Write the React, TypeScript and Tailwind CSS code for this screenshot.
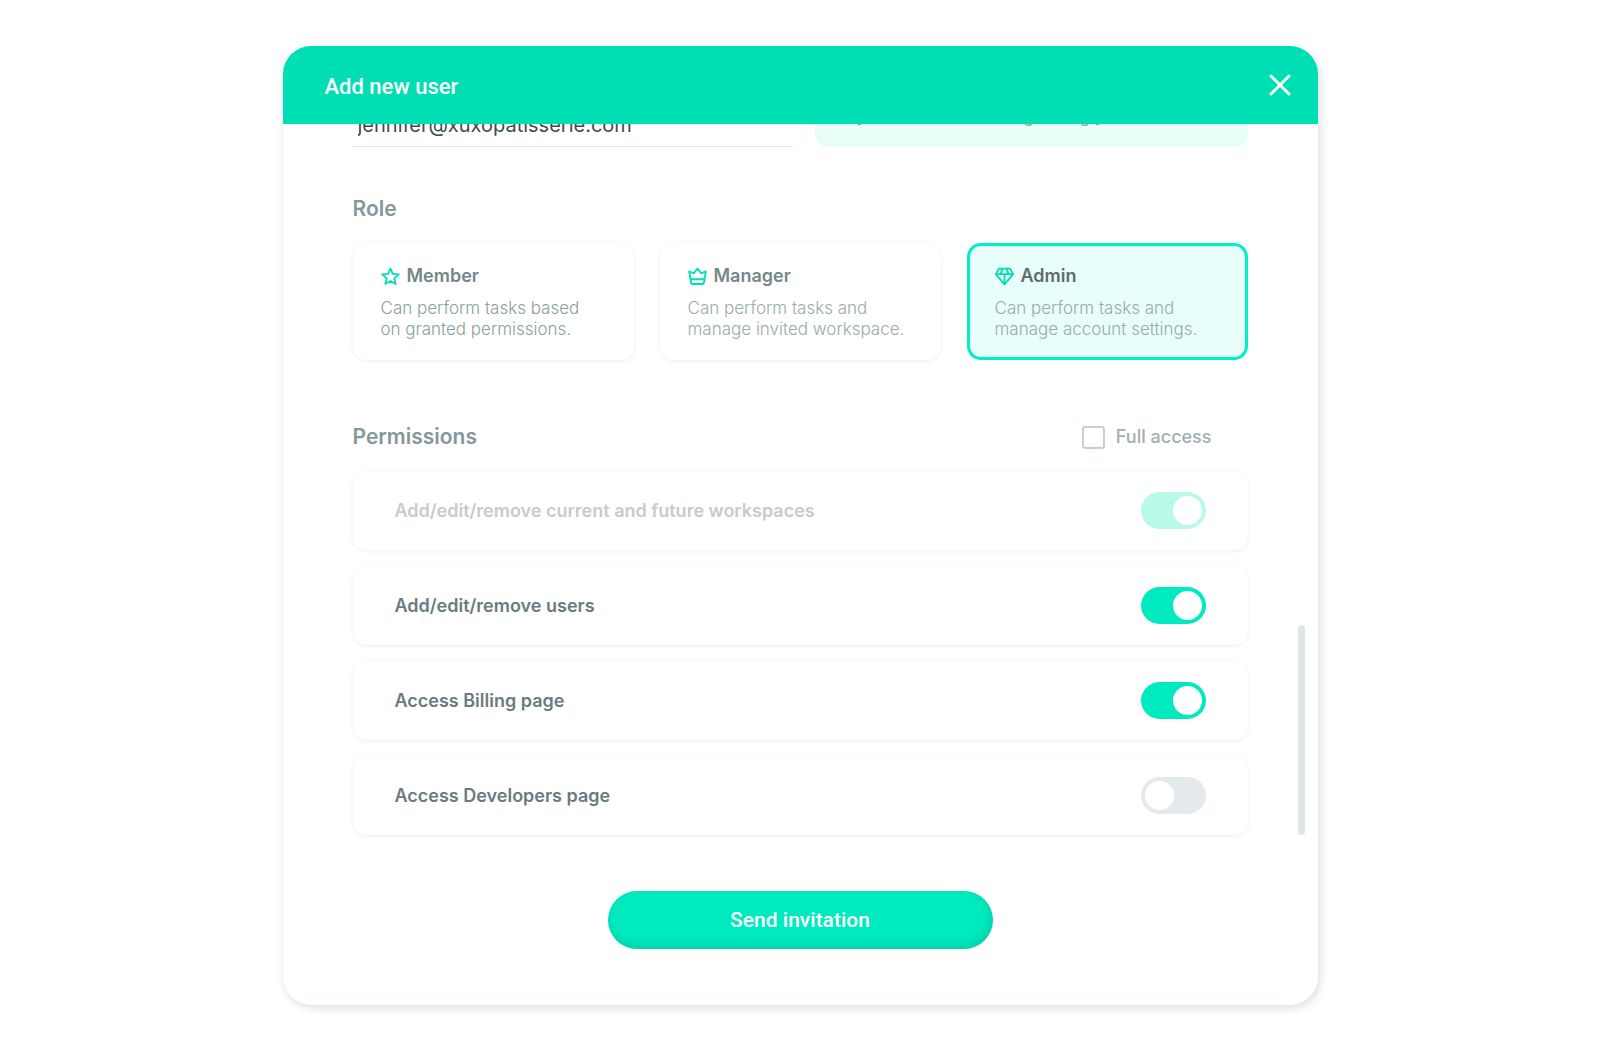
import { useState } from 'react'

const roles = [
  {
    id: 'member',
    name: 'Member',
    lines: ['Can perform tasks based', 'on granted permissions.'],
    icon: 'M12 2l2.900 6.700 7.600.6-5.700 5 1.700 7.200-6.500-3.800-6.500 3.800 1.700-7.200-5.700-5 7.600-.6z',
    text: 'text-[#8b9ea1]',
  },
  {
    id: 'manager',
    name: 'Manager',
    lines: ['Can perform tasks and', 'manage invited workspace.'],
    icon: 'M1.500 5.500l2.300 14.200q.3 1.800 2 1.800h12.400q1.700 0 2-1.800L22.500 5.500l-5.700 2.500L12 2 7.200 8zM3.200 15.500h17.600',
    text: 'text-[#9aabad]',
  },
  {
    id: 'admin',
    name: 'Admin',
    lines: ['Can perform tasks and', 'manage account settings.'],
    icon: 'M5 2h14l4 7L12 22 1 9zM1 9h22M12 22V9M7 9L9.500 2M17 9L14.500 2',
    text: 'text-[#97abab]',
  },
]

const initialPermissions = [
  { id: 'workspaces', label: 'Add/edit/remove current and future workspaces', on: true, disabled: true },
  { id: 'users', label: 'Add/edit/remove users', on: true, disabled: false },
  { id: 'billing', label: 'Access Billing page', on: true, disabled: false },
  { id: 'developers', label: 'Access Developers page', on: false, disabled: false },
]

export default function App() {
  const [role, setRole] = useState('admin')
  const [permissions, setPermissions] = useState(initialPermissions)

  const toggle = (id: string) =>
    setPermissions((list) => list.map((p) => (p.id === id ? { ...p, on: !p.on } : p)))

  return (
    <main className="min-h-screen bg-white px-6 py-[46px] font-['Inter',sans-serif]">
      <section
        role="dialog"
        aria-labelledby="dialog-title"
        className="relative mx-auto max-w-[1035px] overflow-hidden rounded-[28px] bg-white shadow-[2px_3px_8px_rgba(70,100,105,0.2)]"
      >
        {/* Header */}
        <header className="flex items-center justify-between bg-[#00deb4] py-5 pl-[42px] pr-[26px]">
          <h1 id="dialog-title" className="pt-1 text-[22px] font-medium leading-[34px] text-white font-['Roboto',sans-serif]">
            Add new user
          </h1>
          <button type="button" aria-label="Close" className="text-white">
            <svg width="24" height="24" viewBox="0 0 24 24" fill="none" stroke="currentColor" strokeWidth="3" strokeLinecap="round">
              <path d="M3 3l18 18M21 3L3 21" />
            </svg>
          </button>
        </header>

        <form className="px-[70px] pb-14" onSubmit={(e) => e.preventDefault()}>
          {/* Email row, scrolled partly under the header */}
          <div className="flex h-[23px] items-end gap-[22px] overflow-hidden">
            <input
              type="email"
              aria-label="Email"
              defaultValue="jennifer@xuxopatisserie.com"
              className="h-10 min-w-0 flex-1 border-b border-[#dfe6e8] pb-1 pl-[5px] text-xl text-[#414b4f] outline-none"
            />
            <p className="w-[433px] rounded-[14px] bg-[#e6fdf8] px-8 pb-5 pt-4 text-[17px] leading-[21px] text-[#93a5a7]">
              by our owners before granting your access
            </p>
          </div>

          {/* Role */}
          <fieldset className="mt-12">
            <legend className="text-[21px] font-semibold leading-7 text-[#84989b]">Role</legend>
            <div className="mt-5 grid grid-cols-3 gap-[26px]">
              {roles.map((r) => (
                <label
                  key={r.id}
                  className={
                    role === r.id
                      ? 'cursor-pointer rounded-[14px] border-[3px] border-[#00efc5] bg-[#e8fefb] px-[25px] pb-[17px] pt-[18px]'
                      : 'cursor-pointer rounded-[14px] border-[3px] border-transparent bg-white px-[25px] pb-[17px] pt-[18px] shadow-[0_1px_4px_rgba(70,100,105,0.11)]'
                  }
                >
                  <input type="radio" name="role" className="sr-only" checked={role === r.id} onChange={() => setRole(r.id)} />
                  <span className="flex items-center gap-[7px]">
                    <svg width="19" height="19" viewBox="0 0 24 24" fill="none" stroke="#00deb4" strokeWidth="2.300" strokeLinejoin="round">
                      <path d={r.icon} />
                    </svg>
                    <span className={role === r.id ? 'text-lg font-semibold leading-6 text-[#5f6b6e]' : 'text-lg font-semibold leading-6 text-[#74878a]'}>
                      {r.name}
                    </span>
                  </span>
                  <span className={`mt-2.5 block text-[17px] font-light leading-[21px] ${r.text}`}>
                    {r.lines[0]}
                    <br />
                    {r.lines[1]}
                  </span>
                </label>
              ))}
            </div>
          </fieldset>

          {/* Permissions */}
          <div className="mt-[63px] flex items-center justify-between pr-9">
            <h2 className="text-[21px] font-semibold leading-7 text-[#84989b]">Permissions</h2>
            <label className="flex items-center gap-[11px] text-lg font-medium text-[#a0afb2]">
              <input type="checkbox" className="size-[23px] appearance-none rounded-[3px] border-2 border-[#c5d0d3] checked:bg-[#00eabf]" />
              Full access
            </label>
          </div>
          <ul className="mt-5 space-y-4">
            {permissions.map((p) => (
              <li
                key={p.id}
                className="flex items-center justify-between rounded-[14px] bg-white px-[42px] py-[21px] shadow-[0_1px_4px_rgba(70,100,105,0.11)]"
              >
                <label htmlFor={p.id} className={p.disabled ? 'text-lg font-semibold text-[#c5cccf]' : 'text-lg font-semibold text-[#6a7b80]'}>
                  {p.label}
                </label>
                <input
                  id={p.id}
                  type="checkbox"
                  role="switch"
                  checked={p.on}
                  disabled={p.disabled}
                  onChange={() => toggle(p.id)}
                  className="h-[37px] w-[65px] appearance-none rounded-full bg-[#e4eaec] p-1 before:block before:size-[29px] before:rounded-full before:bg-white checked:bg-[#00eabf] checked:before:translate-x-7 checked:disabled:bg-[#b9f9ea]"
                />
              </li>
            ))}
          </ul>

          <button
            type="submit"
            className="mx-auto mt-14 block w-full max-w-[385px] rounded-full bg-[#00eabf] py-[15px] text-[21px] font-medium leading-7 text-white shadow-[inset_-2px_-4px_10px_rgba(0,150,125,0.3)] font-['Roboto',sans-serif]"
          >
            Send invitation
          </button>
        </form>

        {/* Scroll thumb */}
        <div className="absolute bottom-[170px] right-[13px] h-[210px] w-[7px] rounded-full bg-[#dfe7e9]" />
      </section>
    </main>
  )
}
